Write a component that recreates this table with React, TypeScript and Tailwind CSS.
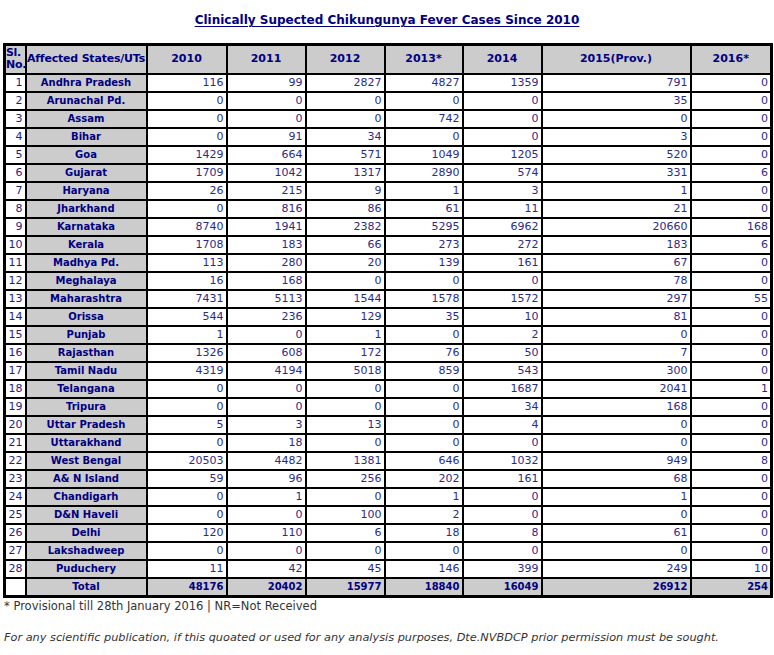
import React from 'react';

type Row = [string, ...number[]];

const rows: Row[] = [
  ['Andhra Pradesh', 116, 99, 2827, 4827, 1359, 791, 0],
  ['Arunachal Pd.', 0, 0, 0, 0, 0, 35, 0],
  ['Assam', 0, 0, 0, 742, 0, 0, 0],
  ['Bihar', 0, 91, 34, 0, 0, 3, 0],
  ['Goa', 1429, 664, 571, 1049, 1205, 520, 0],
  ['Gujarat', 1709, 1042, 1317, 2890, 574, 331, 6],
  ['Haryana', 26, 215, 9, 1, 3, 1, 0],
  ['Jharkhand', 0, 816, 86, 61, 11, 21, 0],
  ['Karnataka', 8740, 1941, 2382, 5295, 6962, 20660, 168],
  ['Kerala', 1708, 183, 66, 273, 272, 183, 6],
  ['Madhya Pd.', 113, 280, 20, 139, 161, 67, 0],
  ['Meghalaya', 16, 168, 0, 0, 0, 78, 0],
  ['Maharashtra', 7431, 5113, 1544, 1578, 1572, 297, 55],
  ['Orissa', 544, 236, 129, 35, 10, 81, 0],
  ['Punjab', 1, 0, 1, 0, 2, 0, 0],
  ['Rajasthan', 1326, 608, 172, 76, 50, 7, 0],
  ['Tamil Nadu', 4319, 4194, 5018, 859, 543, 300, 0],
  ['Telangana', 0, 0, 0, 0, 1687, 2041, 1],
  ['Tripura', 0, 0, 0, 0, 34, 168, 0],
  ['Uttar Pradesh', 5, 3, 13, 0, 4, 0, 0],
  ['Uttarakhand', 0, 18, 0, 0, 0, 0, 0],
  ['West Bengal', 20503, 4482, 1381, 646, 1032, 949, 8],
  ['A& N Island', 59, 96, 256, 202, 161, 68, 0],
  ['Chandigarh', 0, 1, 0, 1, 0, 1, 0],
  ['D&N Haveli', 0, 0, 100, 2, 0, 0, 0],
  ['Delhi', 120, 110, 6, 18, 8, 61, 0],
  ['Lakshadweep', 0, 0, 0, 0, 0, 0, 0],
  ['Puduchery', 11, 42, 45, 146, 399, 249, 10],
];

const totals = [48176, 20402, 15977, 18840, 16049, 26912, 254];
const years = ['2010', '2011', '2012', '2013*', '2014', '2015(Prov.)', '2016*'];
const widths = ['w-[21px]', 'w-[121px]', 'w-[80px]', 'w-[79px]', 'w-[79px]', 'w-[78px]', 'w-[79px]', 'w-[149px]', 'w-[81px]'];

const cell = 'border-2 border-black px-[2px] h-[18px] leading-[14px]';

export default function App() {
  return (
    <div className="bg-white min-h-[655px] text-[11px]" style={{ fontFamily: '"DejaVu Sans", Verdana, sans-serif' }}>
      <div className="pt-[11px] pb-[13px] text-center">
        <span className="text-[12px] font-bold text-[#000080] underline underline-offset-2">
          Clinically Supected Chikungunya Fever Cases Since 2010
        </span>
      </div>
      <table className="ml-[3px] w-[769px] table-fixed border-collapse border-[3px] border-black">
        <colgroup>
          {widths.map((w, i) => (
            <col key={i} className={w} />
          ))}
        </colgroup>
        <thead>
          <tr className="bg-[#cccccc] text-[#000080] font-bold">
            <th className="border-2 border-black h-[30px] px-0 text-left leading-[12px] tracking-[-0.3px]">
              Sl.<br />No.
            </th>
            <th className="border-2 border-black px-0 text-center whitespace-nowrap tracking-[-0.2px]">Affected States/UTs</th>
            {years.map((y) => (
              <th key={y} className="border-2 border-black text-center">{y}</th>
            ))}
          </tr>
        </thead>
        <tbody>
          {rows.map(([name, ...vals], i) => (
            <tr key={name}>
              <td className={`${cell} text-right text-[#1f1f80]`}>{i + 1}</td>
              <td className={`${cell} bg-[#cccccc] text-center text-[10px] font-bold text-[#000080] whitespace-nowrap`}>{name}</td>
              {vals.map((v, j) => (
                <td key={j} className={`${cell} text-right text-[#2b2b85]`}>{v}</td>
              ))}
            </tr>
          ))}
          <tr className="bg-[#cccccc] font-bold text-[10px] text-[#000080]">
            <td className={`${cell} bg-white`}></td>
            <td className={`${cell} text-center`}>Total</td>
            {totals.map((t, j) => (
              <td key={j} className={`${cell} text-right`}>{t}</td>
            ))}
          </tr>
        </tbody>
      </table>
      <p className="mt-0 ml-[4px] text-[11.5px] text-[#333333]">* Provisional till 28th January 2016 | NR=Not Received</p>
      <p className="mt-[15px] ml-[4px] text-[11.3px] italic text-[#333333]">
        For any scientific publication, if this quoated or used for any analysis purposes, Dte.NVBDCP prior permission must be sought.
      </p>
    </div>
  );
}
